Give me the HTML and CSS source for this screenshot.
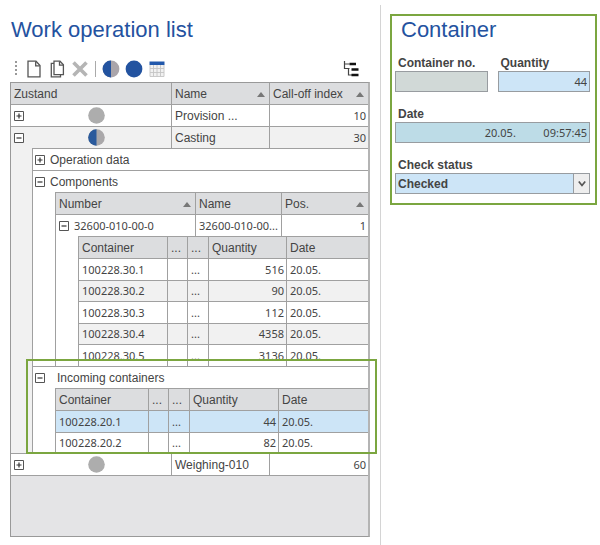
FILE: index.html
```html
<!DOCTYPE html>
<html lang="en">
<head>
  <meta charset="UTF-8">
  <meta name="viewport" content="width=device-width, initial-scale=1.0">
  <title>Work operation list</title>
  <link rel="stylesheet" href="styles.css">
</head>
<body>
  <!-- shared icons -->
  <svg class="symbols" aria-hidden="true">
    <symbol id="plus" viewBox="0 0 10 10"><path d="M.5.5h9v9h-9z" fill="#fff" stroke="#555"/><path d="M2.5 5h5M5 2.5v5" stroke="#333" stroke-width="1.2"/></symbol>
    <symbol id="minus" viewBox="0 0 10 10"><path d="M.5.5h9v9h-9z" fill="#fff" stroke="#555"/><path d="M2.5 5h5" stroke="#333" stroke-width="1.2"/></symbol>
    <symbol id="open" viewBox="0 0 17 17"><circle cx="8.5" cy="8.5" r="8.3" fill="#adadad"/></symbol>
    <symbol id="half" viewBox="0 0 17 17"><circle cx="8.5" cy="8.5" r="8.3" fill="#aaa8aa"/><path d="M8.5.2a8.3 8.3 0 0 0 0 16.6z" fill="#2a5a9c"/></symbol>
  </svg>

  <div class="page">
    <main class="list-pane">
      <h1>Work operation list</h1>

      <div class="toolbar">
        <span class="grip"></span>
        <button type="button" aria-label="New">
          <svg viewBox="0 0 18 18" fill="none" stroke="#555" stroke-width="1.3"><path d="M3 1.2h8l4 4.3v11.3H3z"/><path d="M10.7 1.4v4.4h4"/></svg>
        </button>
        <button type="button" aria-label="Copy">
          <svg viewBox="0 0 18 18" fill="none" stroke="#555" stroke-width="1.3"><path d="M6 1.2h6l3.4 3.5v10H6z"/><path d="M11.5 1.4v3.7H15M6 3.3H3.300v13.500h9.200v-2"/></svg>
        </button>
        <button type="button" aria-label="Delete">
          <svg viewBox="0 0 18 18" fill="none" stroke="#b5b5b5" stroke-width="3.6"><path d="M2.5 2.5l13 13M15.5 2.5l-13 13"/></svg>
        </button>
        <span class="separator"></span>
        <button type="button" aria-label="Started">
          <svg viewBox="0 0 18 18"><circle cx="9" cy="9" r="8.4" fill="#aaa5aa"/><path d="M9 .6a8.4 8.4 0 0 0 0 16.8z" fill="#2353a0"/></svg>
        </button>
        <button type="button" aria-label="Finished">
          <svg viewBox="0 0 18 18"><circle cx="9" cy="9" r="8.4" fill="#2353a0"/></svg>
        </button>
        <button type="button" aria-label="Calendar">
          <svg viewBox="0 0 18 18"><path d="M2 5h14v11.500H2z" fill="#f1f1f1"/><path d="M2 5v11.500h14V5M2 8.500h14M2 12.500h14M5.500 5v11.500M9 5v11.500M12.500 5v11.500" fill="none" stroke="#c4c4c4" stroke-width=".9"/><path d="M1.500 1.500h15V5h-15z" fill="#2258ab"/></svg>
        </button>
        <button type="button" class="tree-button" aria-label="Tree view">
          <svg viewBox="0 0 18 18" fill="none"><path d="M2.500 1v7.500h5M2.500 4h5M6.500 9v6h4" stroke="#444" stroke-width="1.2"/><path d="M7.500 4H14M9.500 9.500h7M9.500 15h7" stroke="#111" stroke-width="2.400"/></svg>
        </button>
      </div>

      <div class="grid">
        <table class="operations">
          <colgroup><col class="w-161"><col class="w-98"><col></colgroup>
          <thead>
            <tr>
              <th>Zustand</th>
              <th class="sorted">Name</th>
              <th class="sorted">Call-off index</th>
            </tr>
          </thead>
          <tbody>
            <tr>
              <td>
                <div class="state">
                  <button type="button" class="toggle" aria-label="Expand"><svg><use href="#plus"/></svg></button>
                  <svg class="status"><use href="#open"/></svg>
                </div>
              </td>
              <td class="label">Provision ...</td>
              <td class="num">10</td>
            </tr>
            <tr class="expanded shaded">
              <td>
                <div class="state">
                  <button type="button" class="toggle" aria-label="Collapse"><svg><use href="#minus"/></svg></button>
                  <svg class="status"><use href="#half"/></svg>
                </div>
              </td>
              <td class="label">Casting</td>
              <td class="num">30</td>
            </tr>
            <tr class="detail shaded">
              <td colspan="3">
                <div class="groups">
                  <section class="group">
                    <div class="group-title">
                      <button type="button" class="toggle" aria-label="Expand"><svg><use href="#plus"/></svg></button>
                      Operation data
                    </div>
                  </section>

                  <section class="group">
                    <div class="group-title">
                      <button type="button" class="toggle" aria-label="Collapse"><svg><use href="#minus"/></svg></button>
                      Components
                    </div>
                    <div class="nested">
                      <table>
                        <colgroup><col class="w-140"><col class="w-86"><col></colgroup>
                        <thead>
                          <tr>
                            <th class="sorted">Number</th>
                            <th>Name</th>
                            <th class="sorted">Pos.</th>
                          </tr>
                        </thead>
                        <tbody>
                          <tr class="expanded">
                            <td>
                              <div class="entry">
                                <button type="button" class="toggle" aria-label="Collapse"><svg><use href="#minus"/></svg></button>
                                32600-010-00-0
                              </div>
                            </td>
                            <td>32600-010-00...</td>
                            <td class="num">1</td>
                          </tr>
                          <tr class="detail">
                            <td colspan="3">
                              <table class="leaf">
                                <colgroup><col class="w-89"><col class="w-20"><col class="w-21"><col class="w-78"><col></colgroup>
                                <thead>
                                  <tr><th>Container</th><th>...</th><th>...</th><th>Quantity</th><th>Date</th></tr>
                                </thead>
                                <tbody>
                                  <tr><td>100228.30.1</td><td></td><td>...</td><td class="num">516</td><td>20.05.</td></tr>
                                  <tr><td>100228.30.2</td><td></td><td>...</td><td class="num">90</td><td>20.05.</td></tr>
                                  <tr><td>100228.30.3</td><td></td><td>...</td><td class="num">112</td><td>20.05.</td></tr>
                                  <tr><td>100228.30.4</td><td></td><td>...</td><td class="num">4358</td><td>20.05.</td></tr>
                                  <tr><td>100228.30.5</td><td></td><td>...</td><td class="num">3136</td><td>20.05.</td></tr>
                                </tbody>
                              </table>
                            </td>
                          </tr>
                        </tbody>
                      </table>
                    </div>
                  </section>

                  <section class="group marked">
                    <div class="group-title">
                      <button type="button" class="toggle" aria-label="Collapse"><svg><use href="#minus"/></svg></button>
                      Incoming containers
                    </div>
                    <div class="nested">
                      <table class="leaf">
                        <colgroup><col class="w-93"><col class="w-20"><col class="w-21"><col class="w-89"><col></colgroup>
                        <thead>
                          <tr><th>Container</th><th>...</th><th>...</th><th>Quantity</th><th>Date</th></tr>
                        </thead>
                        <tbody>
                          <tr class="selected"><td>100228.20.1</td><td></td><td>...</td><td class="num">44</td><td>20.05.</td></tr>
                          <tr><td>100228.20.2</td><td></td><td>...</td><td class="num">82</td><td>20.05.</td></tr>
                        </tbody>
                      </table>
                    </div>
                  </section>
                </div>
              </td>
            </tr>
            <tr>
              <td>
                <div class="state">
                  <button type="button" class="toggle" aria-label="Expand"><svg><use href="#plus"/></svg></button>
                  <svg class="status"><use href="#open"/></svg>
                </div>
              </td>
              <td class="label">Weighing-010</td>
              <td class="num">60</td>
            </tr>
          </tbody>
        </table>
      </div>
    </main>

    <aside class="side-pane">
      <form class="container-form">
        <h2>Container</h2>
        <div class="fields">
          <div class="field">
            <label for="containerNo">Container no.</label>
            <input type="text" id="containerNo" class="readonly" readonly>
          </div>
          <div class="field">
            <label for="quantity">Quantity</label>
            <input type="text" id="quantity" value="44">
          </div>
          <div class="field wide">
            <label for="date">Date</label>
            <input type="text" id="date" class="date" value="20.05.&emsp;&emsp;&ensp;09:57:45">
          </div>
          <div class="field wide">
            <label for="checkStatus">Check status</label>
            <div class="select">
              <select id="checkStatus">
                <option>Checked</option>
              </select>
              <span class="arrow"><svg viewBox="0 0 8 8"><path d="M.8 1.500L4 5.500l3.200-4" fill="none" stroke="#555" stroke-width="1.700"/></svg></span>
            </div>
          </div>
        </div>
      </form>
    </aside>
  </div>
</body>
</html>
```
FILE: styles.css
```css
* {
  box-sizing: border-box;
}
body {
  margin: 0;
  background: #fff;
  color: #444;
  font-family: "Liberation Sans", Arial, sans-serif;
  font-size: 12px;
}
button {
  padding: 0;
  border: none;
  background: none;
  cursor: pointer;
}
svg {
  display: block;
}
.symbols {
  display: none;
}
h1, h2 {
  margin: 0;
  color: #2452a0;
  font-size: 22px;
  font-weight: normal;
  line-height: 24px;
}

.page {
  display: grid;
  grid-template-columns: 19fr 11fr;
  min-height: 100vh;
}
.list-pane {
  display: flex;
  flex-direction: column;
  min-width: 0;
  padding: 18px 10px 8px;
}
.list-pane h1 {
  padding-left: 1px;
}

/* toolbar */
.toolbar {
  display: flex;
  align-items: center;
  gap: 5px;
  margin: 18px 0 4px;
  padding: 0 10px 0 2px;
}
.toolbar button,
.toolbar svg {
  width: 18px;
  height: 18px;
}
.grip {
  width: 8px;
  height: 16px;
  border-left: 3px solid transparent;
  background: repeating-linear-gradient(#999 0 2px, transparent 2px 4px) no-repeat left / 2px 100%;
  background-clip: padding-box;
}
.separator {
  width: 1px;
  height: 16px;
  margin: 0 1px;
  background: #aaa;
}
.toolbar .tree-button {
  margin-left: auto;
}

/* grid */
.grid {
  flex: 1;
  border: 1px solid #999;
  border-right: 2px solid #b4b4b4;
  background: #e4e4e6;
}
table {
  width: 100%;
  table-layout: fixed;
  border-spacing: 0;
}
th, td {
  height: 22px;
  padding: 0 3px;
  border-right: 1px solid #a0a0a0;
  border-bottom: 1px solid #a0a0a0;
  line-height: 16px;
  white-space: nowrap;
  overflow: hidden;
}
th:last-child,
td:last-child {
  border-right: none;
}
th,
td.label {
  font-family: "Liberation Sans", Arial, sans-serif;
  font-size: 12px;
}
th {
  background: #dcdddf;
  font-weight: normal;
  text-align: left;
}
td {
  background: #fff;
  font-family: "Noto Sans", "Open Sans", sans-serif;
  font-size: 11px;
}
td.num {
  padding-right: 2px;
  text-align: right;
}
.sorted::after {
  content: "";
  float: right;
  margin: 6px 1px 0 0;
  border: 4px solid transparent;
  border-top: none;
  border-bottom: 5px solid #777;
}
.shaded > td {
  background: #f1f1f1;
}
.expanded > td {
  height: 21px;
  border-bottom: none;
}
.detail > td {
  height: auto;
  padding: 0 0 0 22px;
  overflow: visible;
}
.operations > tbody > .detail > td {
  padding-left: 21px;
}
.detail table,
.groups {
  border-top: 1px solid #a0a0a0;
  border-left: 1px solid #a0a0a0;
}
.nested table tr:last-child > td {
  border-bottom: none;
}
.leaf tbody tr:nth-child(even) td {
  height: 21px;
  background: #f1f1f1;
}
.leaf tbody tr:last-child td {
  height: 21px;
}
.marked .leaf tbody tr td {
  background: #fff;
}
.marked .leaf tbody tr:last-child td {
  height: 20px;
}
.marked .leaf tbody .selected td {
  background: #cde5f7;
}

.toggle,
.toggle svg {
  flex: none;
  width: 10px;
  height: 10px;
}
.state {
  display: flex;
  align-items: center;
}
.status {
  width: 17px;
  height: 17px;
  margin: 0 auto;
}
.entry {
  display: flex;
  align-items: center;
  gap: 5px;
}

.groups {
  background: #fff;
  font-family: "Liberation Sans", Arial, sans-serif;
  font-size: 12px;
}
.group {
  border-bottom: 1px solid #a0a0a0;
}
.group:last-child {
  border-bottom: none;
}
.group-title {
  display: flex;
  align-items: center;
  gap: 5px;
  height: 21px;
  padding-left: 2px;
}
.nested {
  padding-left: 22px;
}

/* highlighted group, the frame reaches over the neighbouring rows */
.marked {
  position: relative;
}
.marked .group-title {
  gap: 12px;
}
.marked::after {
  content: "";
  position: absolute;
  inset: -8px -9px -1px -7px;
  border: 2px solid #7ba640;
  pointer-events: none;
}

.w-20 { width: 20px; }
.w-21 { width: 21px; }
.w-78 { width: 78px; }
.w-86 { width: 86px; }
.w-89 { width: 89px; }
.w-93 { width: 93px; }
.w-98 { width: 98px; }
.w-140 { width: 140px; }
.w-161 { width: 161px; }

/* container form */
.side-pane {
  margin-top: 5px;
  padding: 9px 3px 9px 9px;
  border-left: 1px solid #d4d4d4;
}
.container-form {
  padding: 2px 5px 9px 3px;
  border: 2px solid #7ba640;
}
.container-form h2 {
  padding-left: 6px;
}
.fields {
  display: grid;
  grid-template-columns: 1fr 1fr;
  gap: 14px 10px;
  margin-top: 13px;
}
.wide {
  grid-column: 1 / 3;
}
.field label {
  display: block;
  padding-left: 3px;
  font-weight: bold;
  line-height: 16px;
}
input, select {
  display: block;
  width: 100%;
  height: 21px;
  padding: 0 2px;
  border: 1px solid #989ca0;
  border-radius: 0;
  background: #cde5f7;
  color: #444;
  font-family: "Noto Sans", "Open Sans", sans-serif;
  font-size: 11px;
  text-align: right;
}
.readonly {
  background: #d1d9d7;
}
.date {
  background: #bddce7;
}
.select {
  position: relative;
}
select {
  appearance: none;
  font-family: "Liberation Sans", Arial, sans-serif;
  font-size: 12px;
  font-weight: bold;
  text-align: left;
}
.arrow {
  position: absolute;
  top: 0;
  right: 0;
  bottom: 0;
  display: flex;
  align-items: center;
  justify-content: center;
  width: 17px;
  border: 1px solid #989ca0;
  background: #eee;
  pointer-events: none;
}
.arrow svg {
  width: 8px;
  height: 8px;
}
```
